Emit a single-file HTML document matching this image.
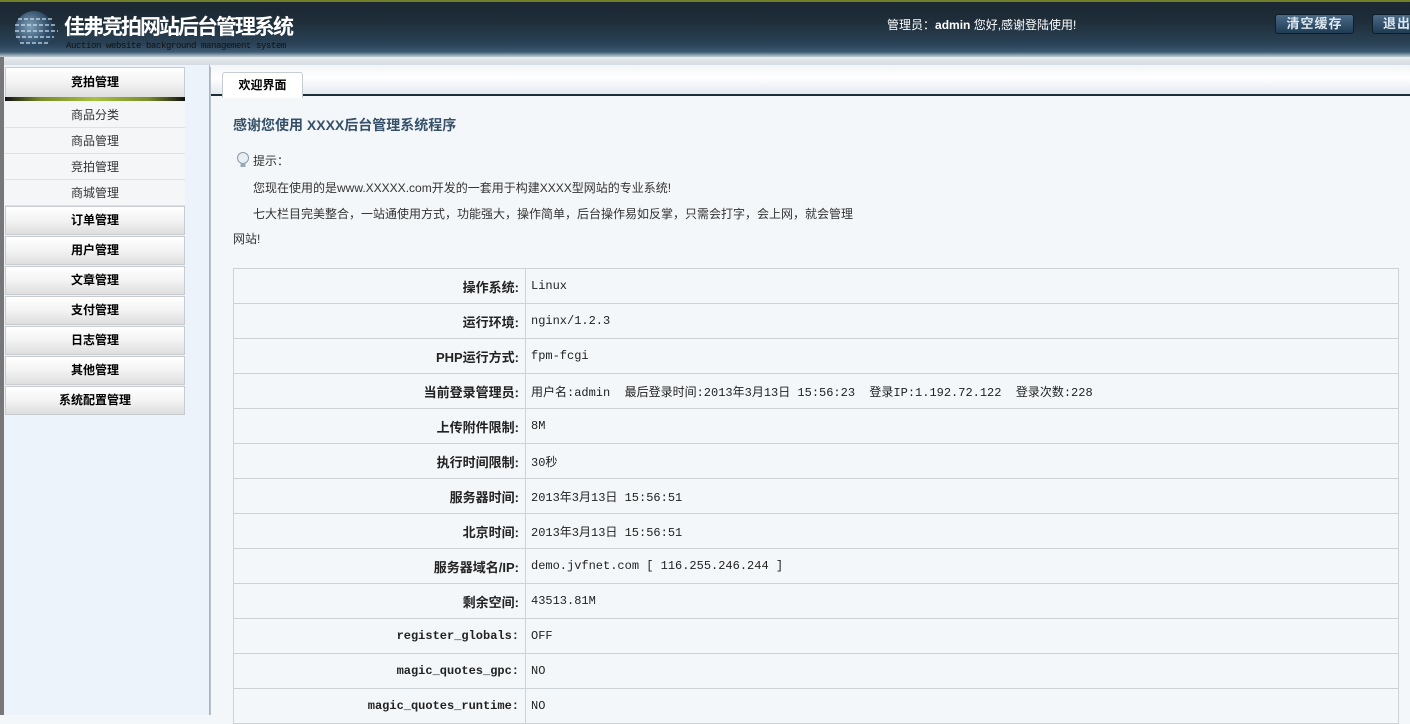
<!DOCTYPE html>
<html><head><meta charset="utf-8"><style>
*{margin:0;padding:0;box-sizing:border-box}
body{width:1410px;height:715px;overflow:hidden;background:#f4f7f9;font-family:"Liberation Sans","Noto Sans CJK SC",sans-serif;font-size:12px;color:#222;position:relative}
#hd{position:absolute;left:0;top:0;width:1410px;height:57px;background:linear-gradient(#1b2731 0,#1f2e3a 20px,#2a4256 42px,#3c5a73 50px,#a9b8c4 54px,#e8ecef 57px);border-top:2px solid #6f7f2a}
#hd .t{position:absolute;left:64px;top:9px;color:#fff;font-size:21px;font-weight:bold;letter-spacing:-2px;font-family:"WenQuanYi Zen Hei","Noto Sans CJK SC",sans-serif}
#hd .s{position:absolute;left:66px;top:39px;color:#111;font-size:9px;font-family:"Liberation Mono",monospace;letter-spacing:-0.4px}
#hd .u{position:absolute;left:887px;top:14px;color:#fff;font-size:12px}
.btn{position:absolute;top:12px;height:20px;border:1px solid #0f1e2a;border-radius:3px;background:linear-gradient(#4a6a86,#1f3b54);color:#dfe8f0;font-weight:bold;font-size:13px;text-align:center;line-height:18px;letter-spacing:1px}
#band{position:absolute;left:0;top:57px;width:1410px;height:8px;background:linear-gradient(#e8ecef,#d4dbe1)}
#lb{position:absolute;left:0;top:57px;width:4px;height:658px;background:#777}
#side{position:absolute;left:4px;top:65px;width:206px;height:650px;background:#edf3fb;border-right:1px solid #a9b5c0}
.mb{position:absolute;left:1px;width:180px;height:29px;background:linear-gradient(#fff,#f3f3f3 50%,#dedede);border:1px solid #c8ccd0;text-align:center;font-weight:bold;font-size:12px;line-height:27px;color:#000}
.bar{position:absolute;left:1px;top:32px;width:180px;height:4px;background:linear-gradient(90deg,#111,#7a8c2a 20%,#a7c040 50%,#7a8c2a 80%,#111)}
.si{position:absolute;left:1px;width:180px;height:26px;text-align:center;line-height:26px;color:#333;border-bottom:1px solid #dde2e6;background:#f4f6f8}
#main{position:absolute;left:210px;top:67px;width:1200px;height:648px;background:#f4f7f9;border-left:1px solid #b8c2cb}
#tabbar{position:absolute;left:0;top:0;width:1200px;height:29px;background:linear-gradient(#f4f6f8,#fff 40%,#e3e9ee);border-bottom:2px solid #1c2d3a}
#tab{position:absolute;left:11px;top:5px;width:81px;height:26px;background:#fff;border:1px solid #c5ccd2;border-bottom:none;border-radius:3px 3px 0 0;font-weight:bold;text-align:center;line-height:24px;font-size:12px;color:#000}
h2{position:absolute;left:22px;top:48px;font-size:14px;color:#355068;font-weight:bold}
.p{position:absolute;color:#333;font-size:12px}
table{position:absolute;left:22px;top:201px;width:1166px;border-collapse:collapse}
td{border:1px solid #cdd2d6;height:35px;font-family:"Liberation Mono","Noto Sans CJK SC",monospace;font-size:12px}
td.l{width:292px;text-align:right;padding-right:6px;font-weight:bold;font-size:13px;font-family:"Liberation Sans","Noto Sans CJK SC",sans-serif}
td.l.m{font-family:"Liberation Mono",monospace;font-size:12px}
td.v{padding-left:5px}
</style></head><body>
<div id="hd">
<svg style="position:absolute;left:12px;top:5px" width="48" height="46" viewBox="0 0 48 46"><defs><radialGradient id="g" cx=".4" cy=".4"><stop offset="0" stop-color="#8fb3d0"/><stop offset="1" stop-color="#2c4a66"/></radialGradient></defs><circle cx="22" cy="23" r="19" fill="url(#g)" opacity=".85"/><g stroke="#cfe0ee" stroke-width="1.3" stroke-dasharray="4 2"><line x1="6" y1="12" x2="40" y2="12"/><line x1="3" y1="18" x2="44" y2="18"/><line x1="3" y1="24" x2="46" y2="24"/><line x1="4" y1="30" x2="42" y2="30"/><line x1="8" y1="36" x2="38" y2="36"/></g></svg>
<div class="t">佳弗竞拍网站后台管理系统</div>
<div class="s">Auction website background management system</div>
<div class="u">管理员：<b>admin</b> 您好,感谢登陆使用!</div>
<div class="btn" style="left:1275px;width:79px">清空缓存</div>
<div class="btn" style="left:1372px;width:50px">退出</div>
</div>
<div id="band"></div>
<div id="lb"></div>
<div id="side">
<div class="mb" style="top:2px;height:31px;line-height:29px">竞拍管理</div>
<div class="bar"></div>
<div class="si" style="top:37px">商品分类</div>
<div class="si" style="top:63px">商品管理</div>
<div class="si" style="top:89px">竞拍管理</div>
<div class="si" style="top:115px">商城管理</div>
<div class="mb" style="top:141px">订单管理</div>
<div class="mb" style="top:171px">用户管理</div>
<div class="mb" style="top:201px">文章管理</div>
<div class="mb" style="top:231px">支付管理</div>
<div class="mb" style="top:261px">日志管理</div>
<div class="mb" style="top:291px">其他管理</div>
<div class="mb" style="top:321px">系统配置管理</div>
</div>
<div id="main">
<div id="tabbar"><div id="tab">欢迎界面</div></div>
<h2>感谢您使用 XXXX后台管理系统程序</h2>
<div class="p" style="left:24px;top:85px"><svg width="18" height="16" viewBox="0 0 18 16" style="vertical-align:-3px"><circle cx="8" cy="6" r="5.5" fill="#e8eef2" stroke="#8a9aa8"/><rect x="5.5" y="11" width="5" height="4" fill="#9aa8b4"/></svg>提示：</div>
<div class="p" style="left:42px;top:112px">您现在使用的是www.XXXXX.com开发的一套用于构建XXXX型网站的专业系统!</div>
<div class="p" style="left:42px;top:138px">七大栏目完美整合，一站通使用方式，功能强大，操作简单，后台操作易如反掌，只需会打字，会上网，就会管理</div>
<div class="p" style="left:22px;top:163px">网站!</div>
<table>
<tr><td class="l">操作系统:</td><td class="v">Linux</td></tr>
<tr><td class="l">运行环境:</td><td class="v">nginx/1.2.3</td></tr>
<tr><td class="l">PHP运行方式:</td><td class="v">fpm-fcgi</td></tr>
<tr><td class="l">当前登录管理员:</td><td class="v">用户名:admin &nbsp;最后登录时间:2013年3月13日 15:56:23 &nbsp;登录IP:1.192.72.122 &nbsp;登录次数:228</td></tr>
<tr><td class="l">上传附件限制:</td><td class="v">8M</td></tr>
<tr><td class="l">执行时间限制:</td><td class="v">30秒</td></tr>
<tr><td class="l">服务器时间:</td><td class="v">2013年3月13日 15:56:51</td></tr>
<tr><td class="l">北京时间:</td><td class="v">2013年3月13日 15:56:51</td></tr>
<tr><td class="l">服务器域名/IP:</td><td class="v">demo.jvfnet.com [ 116.255.246.244 ]</td></tr>
<tr><td class="l">剩余空间:</td><td class="v">43513.81M</td></tr>
<tr><td class="l m">register_globals:</td><td class="v">OFF</td></tr>
<tr><td class="l m">magic_quotes_gpc:</td><td class="v">NO</td></tr>
<tr><td class="l m">magic_quotes_runtime:</td><td class="v">NO</td></tr>
</table>
</div>
</body></html>
